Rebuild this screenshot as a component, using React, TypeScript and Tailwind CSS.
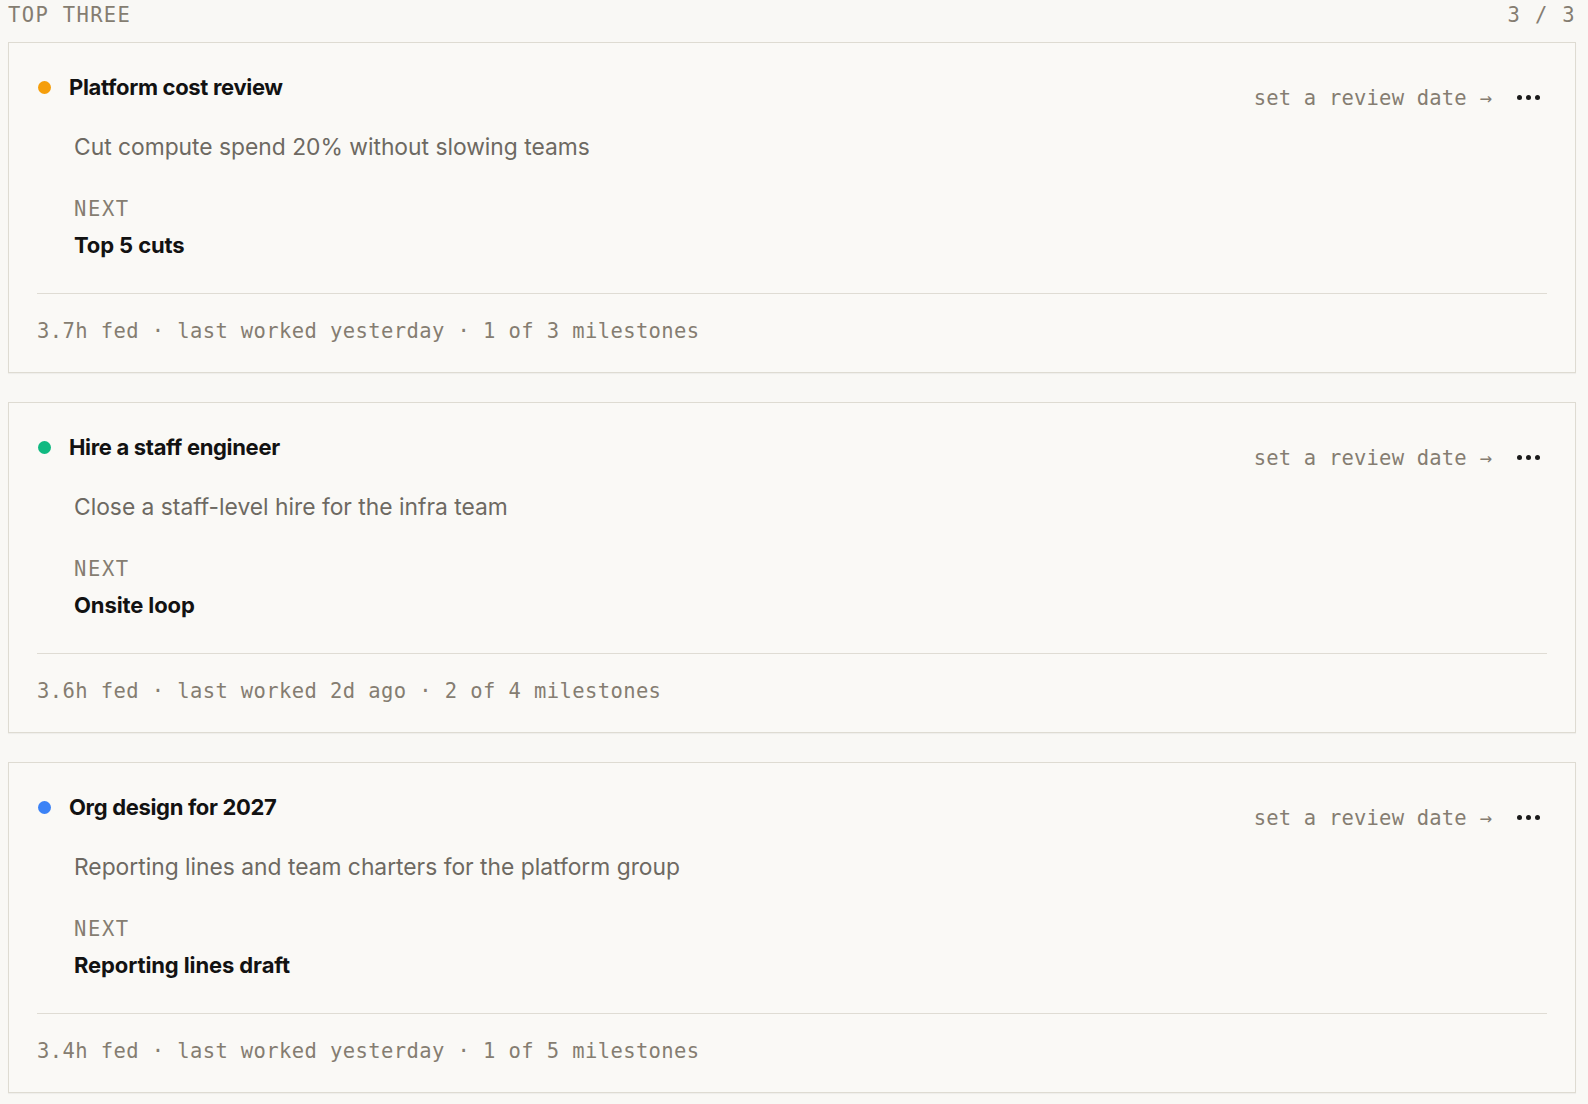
const goals = [
  {
    title: "Platform cost review",
    dot: "bg-[#f59e0b]",
    summary: "Cut compute spend 20% without slowing teams",
    next: "Top 5 cuts",
    meta: "3.7h fed · last worked yesterday · 1 of 3 milestones",
  },
  {
    title: "Hire a staff engineer",
    dot: "bg-[#10b981]",
    summary: "Close a staff-level hire for the infra team",
    next: "Onsite loop",
    meta: "3.6h fed · last worked 2d ago · 2 of 4 milestones",
  },
  {
    title: "Org design for 2027",
    dot: "bg-[#3b82f6]",
    summary: "Reporting lines and team charters for the platform group",
    next: "Reporting lines draft",
    meta: "3.4h fed · last worked yesterday · 1 of 5 milestones",
  },
];

const mono = "font-['DejaVu_Sans_Mono','Liberation_Mono',monospace]";
const sans = "font-['Inter','Noto_Sans',sans-serif]";

function GoalCard({ goal }: { goal: (typeof goals)[number] }) {
  return (
    <div className="border border-[#dedbd2] bg-[#faf9f6] px-[28px] pt-[29px] pb-[27px] shadow-[0_1px_1px_rgba(0,0,0,0.04)]">
      <div className="flex h-[30px] items-start justify-between">
        <div className="flex h-[30px] items-center gap-[18px]">
          <span className={`ml-[1px] h-[13px] w-[13px] rounded-full ${goal.dot}`} />
          <h3 className={`${sans} text-[22px] leading-[30px] font-bold tracking-[-0.015em] text-[#121212]`}>
            {goal.title}
          </h3>
        </div>
        <div className="mt-[12px] flex items-center gap-[25px] pr-[7px]">
          <button className={`${mono} text-[20.5px] leading-[28px] tracking-[0.2px] text-[#857d71]`}>
            set a review date →
          </button>
          <button className="flex items-center gap-[4px] pb-[2px]">
            <span className="h-[5px] w-[5px] rounded-full bg-[#1a1a1a]" />
            <span className="h-[5px] w-[5px] rounded-full bg-[#1a1a1a]" />
            <span className="h-[5px] w-[5px] rounded-full bg-[#1a1a1a]" />
          </button>
        </div>
      </div>
      <div className="pl-[37px]">
        <p className={`${sans} mt-[29px] text-[22.8px] leading-[32px] text-[#6d6962]`}>
          {goal.summary}
        </p>
        <div className={`${mono} mt-[32px] text-[20.5px] leading-[28px] tracking-[1.6px] text-[#857d71]`}>
          NEXT
        </div>
        <div className={`${sans} mt-[7px] text-[22px] leading-[30px] font-bold tracking-[-0.005em] text-[#121212]`}>
          {goal.next}
        </div>
      </div>
      <div className="mt-[33px] h-px bg-[#dfdcd4]" />
      <div className={`${mono} mt-[23px] text-[20.5px] leading-[28px] tracking-[0.4px] text-[#857d71]`}>
        {goal.meta}
      </div>
    </div>
  );
}

export default function App() {
  return (
    <main className="min-h-screen w-full bg-[#f9f8f5] pl-[8px] pr-[12px]">
      <div className={`${mono} flex h-[30px] items-center justify-between text-[20.5px] tracking-[1.35px] text-[#857d71]`}>
        <span>TOP THREE</span>
        <span>3 / 3</span>
      </div>
      <div className="mt-[12px] flex flex-col gap-[29px]">
        {goals.map((goal) => (
          <GoalCard key={goal.title} goal={goal} />
        ))}
      </div>
    </main>
  );
}
